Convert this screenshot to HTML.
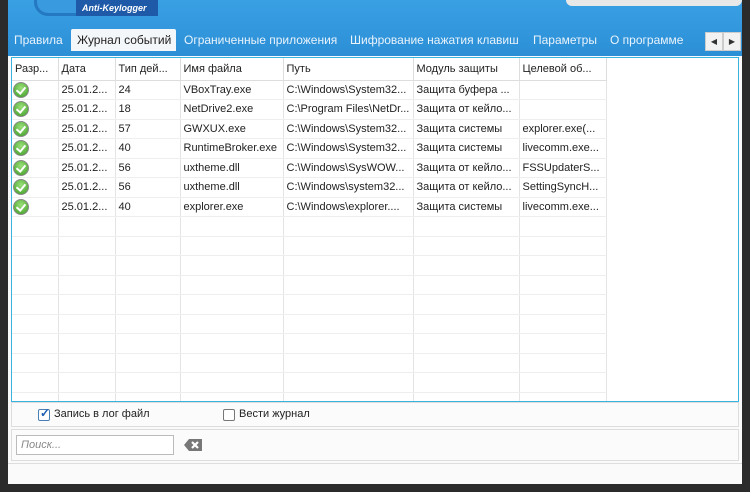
<!DOCTYPE html>
<html><head><meta charset="utf-8"><style>
*{margin:0;padding:0;box-sizing:border-box}
body{width:750px;height:492px;background:#2b2b2b;position:relative;overflow:hidden;font-family:"Liberation Sans",sans-serif;font-size:11px;color:#222}
.hdr{position:absolute;left:8px;top:0;width:734px;height:56px;background:linear-gradient(#3aa0e4,#2c8fd6)}
.panel{position:absolute;left:8px;top:56px;width:734px;height:428px;background:#fafafa}
.logo1{position:absolute;left:26px;top:-14px;width:60px;height:30px;border:3px solid #2479c2;border-radius:14px;background:#3a9ae0}
.logo2{position:absolute;left:68px;top:0;width:82px;height:16px;background:#1f5aa8;color:#fff;font-style:italic;font-weight:bold;font-size:9px;padding:3px 0 0 6px}
.srch{position:absolute;left:558px;top:-10px;width:176px;height:16px;background:#e8e8e8;border-radius:6px}
.tabs{position:absolute;top:33px;left:8px;font-size:12px;color:#e8f3fc;white-space:nowrap}
.tabs span{position:absolute;top:0}
.act{position:absolute;left:71px;top:29px;width:105px;height:22px;background:#f4f7fa;border-radius:2px 2px 0 0;color:#222;font-size:12px;padding:4px 0 0 6px}
.arr{position:absolute;top:32px;width:18px;height:19px;background:#f2f2f2;border:1px solid #ccc;font-size:8px;color:#333;text-align:center;line-height:17px}
.tbl{position:absolute;left:11px;top:57px;width:728px;height:345px;border:1px solid #3ab3e0;background:#fff;overflow:hidden}
table{border-collapse:collapse;table-layout:fixed;width:594px}
td{height:19.5px;border-right:1px solid #e4e4e4;border-bottom:1px solid #eee;padding:0 0 0 3px;white-space:nowrap;overflow:hidden;vertical-align:middle}
tr.h td{height:22px;border-bottom:1px solid #ddd;border-right:1px solid #ddd}
.ok{display:inline-block;width:16px;height:16px;border-radius:50%;background:radial-gradient(circle at 50% 35%,#9be07a,#3c9a22);border:1px solid #8a8a8a;position:relative;vertical-align:middle;margin-left:-2px}
.ok:after{content:"";position:absolute;left:4px;top:2px;width:4px;height:7px;border:solid #fff;border-width:0 2px 2px 0;transform:rotate(40deg)}
.box1{position:absolute;left:11px;top:402px;width:728px;height:25px;border:1px solid #ddd;background:#fbfbfb}
.box2{position:absolute;left:11px;top:429px;width:728px;height:32px;border:1px solid #ddd;background:#fbfbfb}
.cb{position:absolute;top:6px;width:12px;height:12px;border:1px solid #777;border-radius:2px;background:#fff}
.inp{position:absolute;left:4px;top:5px;width:158px;height:20px;border:1px solid #bbb;background:#fff;font-style:italic;color:#888;padding:3px 4px}
.strip{position:absolute;left:8px;top:463px;width:734px;height:1px;background:#ddd}
</style></head><body>
<div class="hdr">
<div class="logo1"></div><div class="logo2">Anti-Keylogger</div>
<div class="srch"></div>
</div>
<div class="tabs">
<span style="left:6px">Правила</span>
<span style="left:176px">Ограниченные приложения</span>
<span style="left:342px">Шифрование нажатия клавиш</span>
<span style="left:525px">Параметры</span>
<span style="left:602px">О программе</span>
</div>
<div class="act">Журнал событий</div>
<div class="arr" style="left:705px">◀</div><div class="arr" style="left:723px">▶</div>
<div class="panel"></div>
<div class="tbl"><table>
<colgroup><col style="width:46px"><col style="width:57px"><col style="width:65px"><col style="width:103px"><col style="width:130px"><col style="width:106px"><col style="width:87px"></colgroup>
<tr class="h"><td>Разр...</td><td>Дата</td><td>Тип дей...</td><td>Имя файла</td><td>Путь</td><td>Модуль защиты</td><td>Целевой об...</td></tr>
<tr><td><i class="ok"></i></td><td>25.01.2...</td><td>24</td><td>VBoxTray.exe</td><td>C:\Windows\System32...</td><td>Защита буфера ...</td><td></td></tr>
<tr><td><i class="ok"></i></td><td>25.01.2...</td><td>18</td><td>NetDrive2.exe</td><td>C:\Program Files\NetDr...</td><td>Защита от кейло...</td><td></td></tr>
<tr><td><i class="ok"></i></td><td>25.01.2...</td><td>57</td><td>GWXUX.exe</td><td>C:\Windows\System32...</td><td>Защита системы</td><td>explorer.exe(...</td></tr>
<tr><td><i class="ok"></i></td><td>25.01.2...</td><td>40</td><td>RuntimeBroker.exe</td><td>C:\Windows\System32...</td><td>Защита системы</td><td>livecomm.exe...</td></tr>
<tr><td><i class="ok"></i></td><td>25.01.2...</td><td>56</td><td>uxtheme.dll</td><td>C:\Windows\SysWOW...</td><td>Защита от кейло...</td><td>FSSUpdaterS...</td></tr>
<tr><td><i class="ok"></i></td><td>25.01.2...</td><td>56</td><td>uxtheme.dll</td><td>C:\Windows\system32...</td><td>Защита от кейло...</td><td>SettingSyncH...</td></tr>
<tr><td><i class="ok"></i></td><td>25.01.2...</td><td>40</td><td>explorer.exe</td><td>C:\Windows\explorer....</td><td>Защита системы</td><td>livecomm.exe...</td></tr>
<tr><td></td><td></td><td></td><td></td><td></td><td></td><td></td></tr>
<tr><td></td><td></td><td></td><td></td><td></td><td></td><td></td></tr>
<tr><td></td><td></td><td></td><td></td><td></td><td></td><td></td></tr>
<tr><td></td><td></td><td></td><td></td><td></td><td></td><td></td></tr>
<tr><td></td><td></td><td></td><td></td><td></td><td></td><td></td></tr>
<tr><td></td><td></td><td></td><td></td><td></td><td></td><td></td></tr>
<tr><td></td><td></td><td></td><td></td><td></td><td></td><td></td></tr>
<tr><td></td><td></td><td></td><td></td><td></td><td></td><td></td></tr>
<tr><td></td><td></td><td></td><td></td><td></td><td></td><td></td></tr>
<tr><td></td><td></td><td></td><td></td><td></td><td></td><td></td></tr>
</table></div>
<div class="box1">
<div class="cb" style="left:26px;border-color:#4a7fb5"><span style="position:absolute;left:1px;top:-4px;color:#1d5fb0;font-size:12px;font-weight:bold">✓</span></div>
<span style="position:absolute;left:42px;top:5px">Запись в лог файл</span>
<div class="cb" style="left:211px"></div>
<span style="position:absolute;left:227px;top:5px">Вести журнал</span>
</div>
<div class="box2">
<div class="inp">Поиск...</div>
<svg style="position:absolute;left:171px;top:8px" width="20" height="14" viewBox="0 0 20 14"><path d="M6 1H19V13H6L1 7Z" fill="#777"/><path d="M9 4L15 10M15 4L9 10" stroke="#fff" stroke-width="2.2"/></svg>
</div>
<div class="strip"></div>
</body></html>
